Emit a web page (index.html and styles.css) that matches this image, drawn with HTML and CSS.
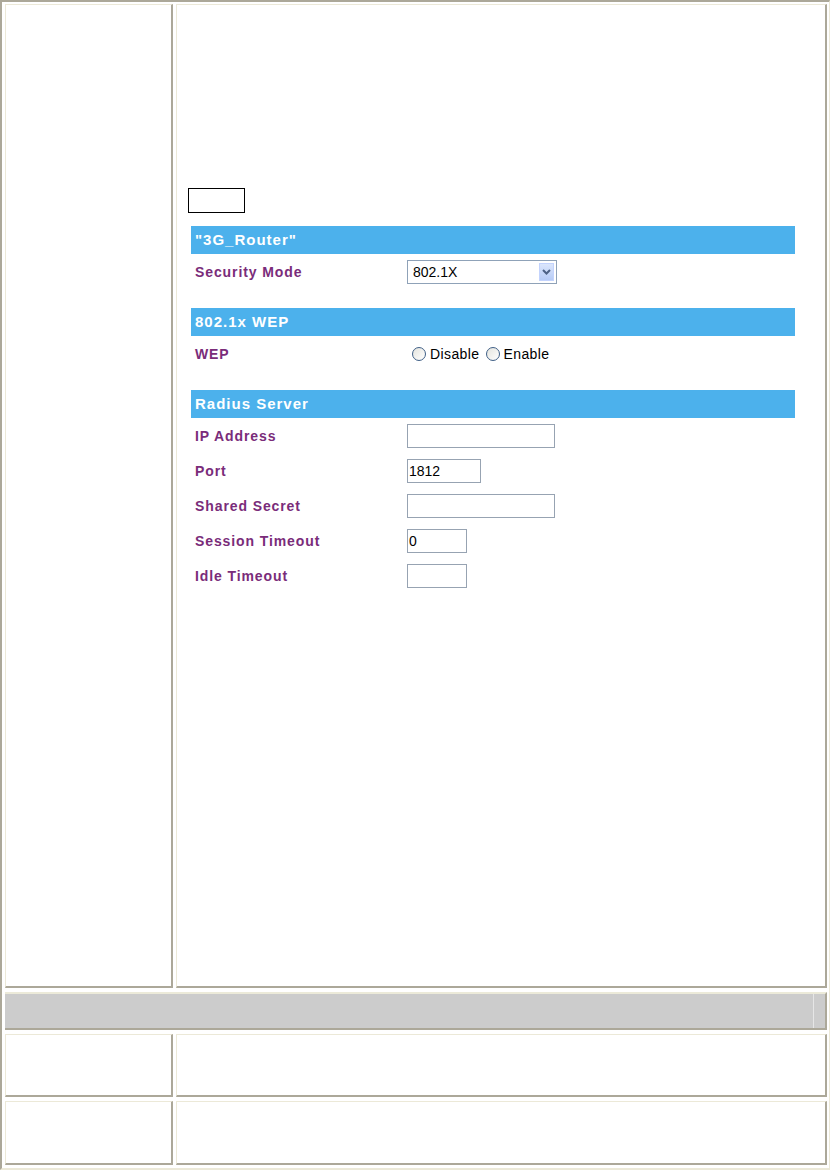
FILE: index.html
```html
<!DOCTYPE html>
<html lang="en">

<head>
    <meta charset="UTF-8">
    <title>Wireless Security</title>
    <link rel="stylesheet" href="styles.css">
</head>

<body>
    <div class="frame">
        <div class="row row-main">
            <div class="cell cell-left"></div>
            <div class="cell cell-right">
                <div class="content">
                    <div class="blank-btn"></div>

                    <div class="section">
                        <div class="bar">&quot;3G_Router&quot;</div>
                        <div class="field">
                            <span class="label">Security Mode</span>
                            <div class="select">
                                <span class="select-text">802.1X</span>
                                <span class="select-arrow">
                                    <svg width="9" height="6" viewBox="0 0 9 6">
                                        <path d="M1 1 L4.5 4.5 L8 1" fill="none" stroke="#4d6185" stroke-width="2"/>
                                    </svg>
                                </span>
                            </div>
                        </div>
                    </div>

                    <div class="section">
                        <div class="bar">802.1x WEP</div>
                        <div class="field">
                            <span class="label">WEP</span>
                            <label class="radio"><span class="dot"></span>Disable</label>
                            <label class="radio"><span class="dot"></span>Enable</label>
                        </div>
                    </div>

                    <div class="section">
                        <div class="bar">Radius Server</div>
                        <div class="field">
                            <span class="label">IP Address</span>
                            <input class="box box-long" type="text" value="">
                        </div>
                        <div class="field">
                            <span class="label">Port</span>
                            <input class="box box-mid" type="text" value="1812">
                        </div>
                        <div class="field">
                            <span class="label">Shared Secret</span>
                            <input class="box box-long" type="text" value="">
                        </div>
                        <div class="field">
                            <span class="label">Session Timeout</span>
                            <input class="box box-short" type="text" value="0">
                        </div>
                        <div class="field">
                            <span class="label">Idle Timeout</span>
                            <input class="box box-short" type="text" value="">
                        </div>
                    </div>
                </div>
            </div>
        </div>

        <div class="row row-gray">
            <div class="gray-main"></div>
            <div class="gray-end"></div>
        </div>

        <div class="row row-small">
            <div class="cell cell-left"></div>
            <div class="cell cell-right"></div>
        </div>

        <div class="row row-small">
            <div class="cell cell-left"></div>
            <div class="cell cell-right"></div>
        </div>
    </div>
</body>

</html>
```

FILE: styles.css
```css
body {
    margin: 0;
    font-family: "Liberation Sans", Arial, sans-serif;
    background-color: #fff;
}

.frame {
    box-sizing: border-box;
    width: 830px;
    height: 1170px;
    border-top: 2px solid #aca899;
    border-left: 2px solid #aca899;
    border-right: 1px solid #ece9d8;
    border-bottom: 2px solid #ece9d8;
    padding: 2px 2px 3px 3px;
    display: flex;
    flex-direction: column;
    gap: 4px;
}

.row {
    display: flex;
    gap: 3px;
}

.row-main {
    height: 985px;
}

.row-small {
    height: 63px;
}

.row-small:last-child {
    height: 64px;
}

.cell {
    box-sizing: border-box;
    border-top: 1px solid #ece9d8;
    border-left: 1px solid #ece9d8;
    border-right: 2px solid #aca899;
    border-bottom: 2px solid #aca899;
    background-color: #fff;
}

.cell-left {
    width: 168px;
}

.cell-right {
    flex: 1;
}

.row-gray {
    box-sizing: border-box;
    height: 38px;
    gap: 0;
    background-color: #ccc;
    border-top: 2px solid #ecead9;
    border-bottom: 2px solid #aca899;
    border-right: 2px solid #aca899;
}

.gray-main {
    width: 808px;
}

.gray-end {
    flex: 1;
    border-left: 1px solid #e6e6e6;
}

.content {
    padding: 183px 30px 0 11px;
}

.blank-btn {
    width: 55px;
    height: 23px;
    border: 1px solid #000;
    margin-bottom: 13px;
}

.section {
    margin-left: 3px;
    margin-bottom: 19px;
}

.bar {
    height: 28px;
    line-height: 28px;
    padding-left: 4px;
    background-color: #4cb1ec;
    color: #fff;
    font-size: 15px;
    font-weight: bold;
    letter-spacing: 1px;
}

.field {
    display: flex;
    align-items: center;
    height: 35px;
}

.label {
    box-sizing: border-box;
    width: 216px;
    padding-left: 4px;
    color: #7a2c7a;
    font-size: 14px;
    font-weight: bold;
    letter-spacing: 0.9px;
}

.select {
    box-sizing: border-box;
    width: 150px;
    height: 24px;
    border: 1px solid #8fa2b8;
    display: flex;
    align-items: center;
    justify-content: space-between;
    padding: 0 2px 0 5px;
    font-size: 14px;
}

.select-arrow {
    width: 15px;
    height: 18px;
    display: flex;
    align-items: center;
    justify-content: center;
    background: linear-gradient(#dbe6fc, #b6cbf6);
    border: 1px solid #c3d3fd;
    box-sizing: border-box;
}

.radio {
    display: flex;
    align-items: center;
    font-size: 14px;
    letter-spacing: 0.4px;
    margin-right: 6px;
    margin-left: 5px;
}

.radio + .radio {
    margin-left: 0;
}

.dot {
    width: 12px;
    height: 12px;
    border: 1px solid #3f5f86;
    border-radius: 50%;
    background: linear-gradient(135deg, #e4e4de, #fff);
    margin-right: 4px;
}

.box {
    box-sizing: border-box;
    height: 24px;
    border: 1px solid #97a3b2;
    padding: 0 1px;
    font-family: "Liberation Sans", Arial, sans-serif;
    font-size: 14px;
    color: #000;
    margin: 0;
    outline: none;
}

.box-long {
    width: 148px;
}

.box-mid {
    width: 74px;
}

.box-short {
    width: 60px;
}
```
